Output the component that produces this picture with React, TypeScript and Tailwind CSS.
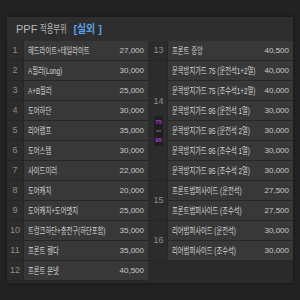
import React from "react";

type Item = { name: string; price: string };

const left: { no: number; name: string; price: string }[] = [
  { no: 1, name: "헤드라이트+테일라이트", price: "27,000" },
  { no: 2, name: "A필러(Long)", price: "30,000" },
  { no: 3, name: "A+B필러", price: "25,000" },
  { no: 4, name: "도어하단", price: "30,000" },
  { no: 5, name: "리어램프", price: "35,000" },
  { no: 6, name: "도어스텝", price: "30,000" },
  { no: 7, name: "사이드미러", price: "22,000" },
  { no: 8, name: "도어캐치", price: "20,000" },
  { no: 9, name: "도어캐치+도어엣지", price: "25,000" },
  { no: 10, name: "트렁크하단+충전구(하단포함)", price: "35,000" },
  { no: 11, name: "프론트 휀다", price: "35,000" },
  { no: 12, name: "프론트 본넷", price: "40,500" },
];

const right: { no: number; badge?: boolean; items: Item[] }[] = [
  { no: 13, items: [{ name: "프론트 중앙", price: "40,500" }] },
  {
    no: 14,
    badge: true,
    items: [
      { name: "문콕방지가드 75 (운전석1+2열)", price: "40,000" },
      { name: "문콕방지가드 75 (조수석1+2열)", price: "40,000" },
      { name: "문콕방지가드 95 (운전석 1열)", price: "30,000" },
      { name: "문콕방지가드 95 (운전석 2열)", price: "30,000" },
      { name: "문콕방지가드 95 (조수석 1열)", price: "30,000" },
      { name: "문콕방지가드 95 (조수석 2열)", price: "30,000" },
    ],
  },
  {
    no: 15,
    items: [
      { name: "프론트범퍼사이드 (운전석)", price: "27,500" },
      { name: "프론트범퍼사이드 (조수석)", price: "27,500" },
    ],
  },
  {
    no: 16,
    items: [
      { name: "리어범퍼사이드 (운전석)", price: "30,000" },
      { name: "리어범퍼사이드 (조수석)", price: "30,000" },
    ],
  },
];

const Cell = ({ name, price }: Item) => (
  <div className="w-full min-w-0 h-[20px] border-b border-[#272727] bg-[#383838] flex items-center pl-[4px] pr-[4px] overflow-hidden">
    <div className="flex-1 min-w-0">
      <span className="block whitespace-nowrap origin-left scale-x-[0.7] text-[9px] leading-[12px] text-[#d4d4d4]">
        {name}
      </span>
    </div>
    <span className="shrink-0 text-[8px] leading-[12px] text-[#c8c8c8]">{price}</span>
  </div>
);

export default function App() {
  return (
    <div
      className="w-[300px] h-[300px] bg-[#222222] pt-[17px] px-[7px] overflow-hidden"
      style={{ fontFamily: "'Liberation Sans', 'Noto Sans CJK KR', sans-serif" }}
    >
      <div className="w-[286px] bg-[#2a2a2a] shadow-[0_0_4px_rgba(0,0,0,0.4)]">
        {/* header */}
        <div className="h-[24px] bg-[#2e2e2e] flex items-center pl-[9px] text-[11px] text-[#b8b8b8]">
          <span>PPF&nbsp;</span>
          <span className="inline-block w-[30px] whitespace-nowrap origin-left scale-x-[0.66]">적용부위</span>
          <span className="ml-[3px] text-[#5a9ee6] font-semibold">
            [<span className="inline-block w-[21px] whitespace-nowrap origin-left scale-x-[0.9]">실외</span>]
          </span>
        </div>

        <div className="flex gap-[2px] pb-[2px]">
          {/* left table */}
          <div className="w-[141px] shrink-0 flex flex-col">
            {left.map((r) => (
              <div key={r.no} className="flex">
                <div className="w-[17px] shrink-0 h-[20px] border-b border-r border-[#262626] bg-[#2c2c2c] flex items-center justify-center text-[9px] text-[#8c8c8c]">
                  {r.no}
                </div>
                <div className="flex-1 min-w-0">
                  <Cell name={r.name} price={r.price} />
                </div>
              </div>
            ))}
          </div>

          {/* right table */}
          <div className="w-[143px] shrink-0 flex flex-col self-start">
            {right.map((g) => (
              <div key={g.no} className="flex">
                <div className="w-[18px] shrink-0 border-b border-r border-[#262626] bg-[#2c2c2c] flex items-center justify-center">
                  <div className="flex flex-col items-center">
                    <div className="text-[9px] leading-[11px] text-[#8c8c8c]">{g.no}</div>
                    {g.badge && (
                      <div className="mt-[9px] w-[9px] bg-[#1f1f1f] rounded-[1px] flex flex-col items-center py-[2px]">
                        <div className="text-[6px] leading-[8px] font-bold text-[#b13ad6]">75</div>
                        <div className="my-[4px] w-[5px] h-[2px] bg-[#4a4a4a]" />
                        <div className="text-[6px] leading-[8px] font-bold text-[#b13ad6]">95</div>
                      </div>
                    )}
                  </div>
                </div>
                <div className="flex-1 min-w-0 flex flex-col">
                  {g.items.map((it, i) => (
                    <Cell key={i} name={it.name} price={it.price} />
                  ))}
                </div>
              </div>
            ))}
          </div>
        </div>
      </div>
    </div>
  );
}
